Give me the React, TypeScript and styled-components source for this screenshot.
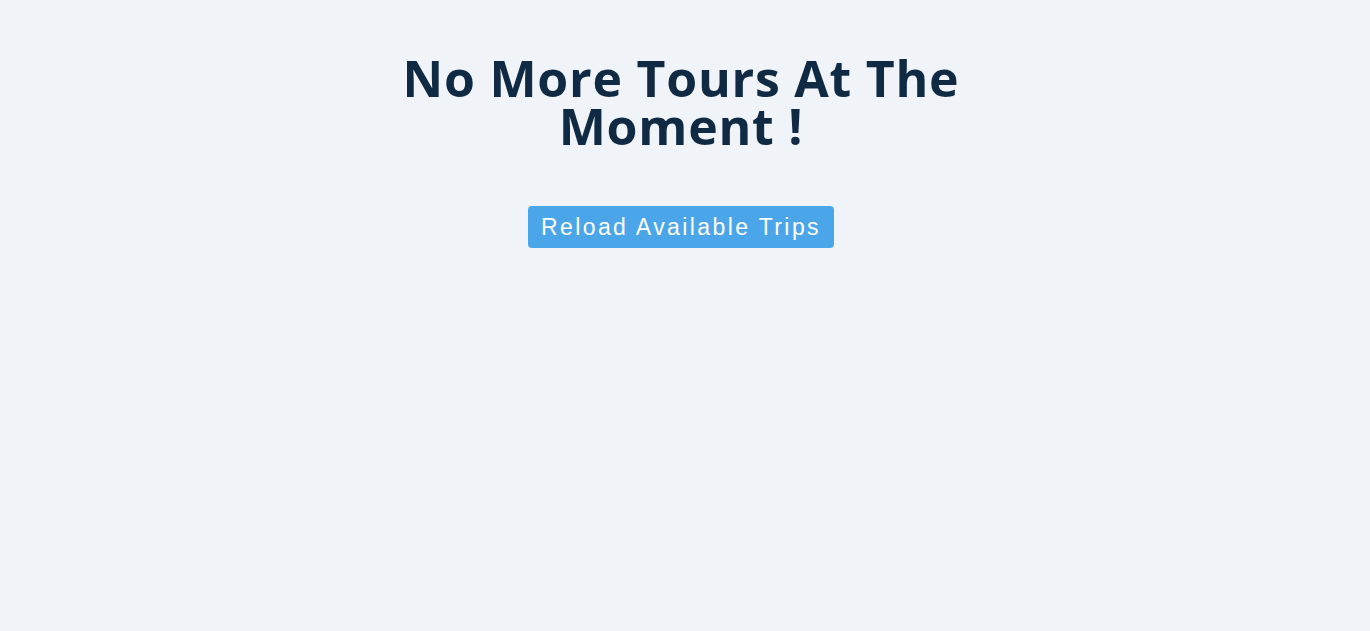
import React from "react";
import styled, { createGlobalStyle } from "styled-components";

const Global = createGlobalStyle`
  html, body { margin: 0; padding: 0; background: #f0f4f8; }
  body { font-family: "Open Sans", "Noto Sans", sans-serif; }
`;

const Page = styled.main`
  min-height: 100vh;
  display: flex;
  flex-direction: column;
  align-items: center;
  padding: 54px 8px 0 0;
  box-sizing: border-box;
`;

const Title = styled.h2`
  margin: 0;
  width: 600px;
  text-align: center;
  font-family: "Open Sans", "Noto Sans", sans-serif;
  font-weight: 700;
  font-size: 50px;
  line-height: 48px;
  letter-spacing: 0.75px;
  color: #102a43;
`;

const ReloadButton = styled.button`
  margin-top: 56px;
  height: 42px;
  padding: 0 13px 0 13px;
  border: none;
  border-radius: 4px;
  background: #4ba6e9;
  color: #ffffff;
  font-family: "Liberation Sans", Arial, sans-serif;
  font-size: 23px;
  letter-spacing: 2.4px;
  cursor: pointer;
`;

export default function App() {
  return (
    <>
      <Global />
      <Page>
        <Title>No More Tours At The Moment !</Title>
        <ReloadButton type="button">Reload Available Trips</ReloadButton>
      </Page>
    </>
  );
}
